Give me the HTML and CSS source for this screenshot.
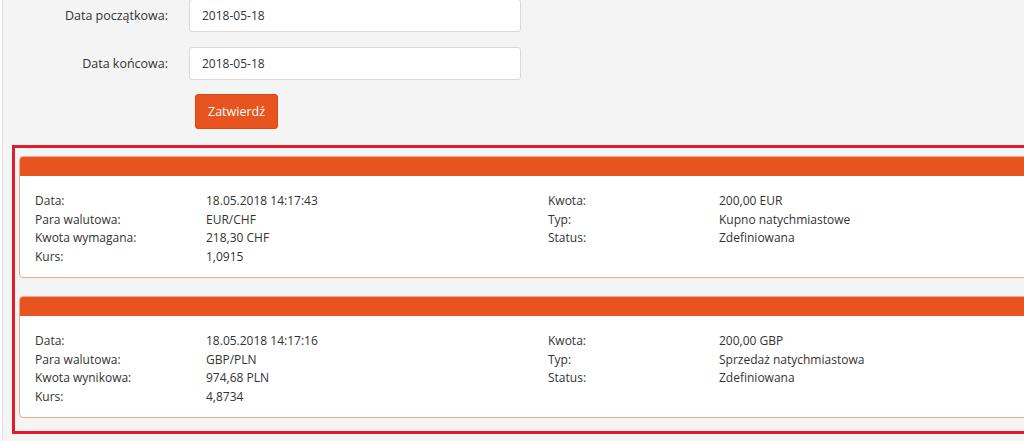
FILE: index.html
```html
<!DOCTYPE html>
<html lang="pl">
<head>
    <meta charset="UTF-8">
    <title>Transakcje</title>
    <link rel="stylesheet" href="styles.css">
</head>
<body>
    <div class="page">
        <form class="filter-form">
            <div class="form-row">
                <label for="date-from">Data początkowa:</label>
                <input type="text" id="date-from" value="2018-05-18">
            </div>
            <div class="form-row">
                <label for="date-to">Data końcowa:</label>
                <input type="text" id="date-to" value="2018-05-18">
            </div>
            <button type="button" class="btn-submit">Zatwierdź</button>
        </form>

        <section class="results">
            <div class="deal-card">
                <div class="deal-header"></div>
                <div class="deal-body">
                    <div class="deal-col">
                        <span>Data:</span><span>18.05.2018 14:17:43</span>
                        <span>Para walutowa:</span><span>EUR/CHF</span>
                        <span>Kwota wymagana:</span><span>218,30 CHF</span>
                        <span>Kurs:</span><span>1,0915</span>
                    </div>
                    <div class="deal-col">
                        <span>Kwota:</span><span>200,00 EUR</span>
                        <span>Typ:</span><span>Kupno natychmiastowe</span>
                        <span>Status:</span><span>Zdefiniowana</span>
                    </div>
                </div>
            </div>

            <div class="deal-card">
                <div class="deal-header"></div>
                <div class="deal-body">
                    <div class="deal-col">
                        <span>Data:</span><span>18.05.2018 14:17:16</span>
                        <span>Para walutowa:</span><span>GBP/PLN</span>
                        <span>Kwota wynikowa:</span><span>974,68 PLN</span>
                        <span>Kurs:</span><span>4,8734</span>
                    </div>
                    <div class="deal-col">
                        <span>Kwota:</span><span>200,00 GBP</span>
                        <span>Typ:</span><span>Sprzedaż natychmiastowa</span>
                        <span>Status:</span><span>Zdefiniowana</span>
                    </div>
                </div>
            </div>
        </section>
    </div>
</body>
</html>
```

FILE: styles.css
```css
html, body {
    margin: 0;
    padding: 0;
    background: #fff;
    overflow: hidden;
}
body {
    font-family: 'Open Sans', 'DejaVu Sans', sans-serif;
    font-size: 12px;
    color: #333;
}
.page {
    margin-left: 2px;
    border-left: 1px solid #e2e2e2;
    background: #f4f4f4;
    min-height: 441px;
    width: 1100px;
    display: flow-root;
}
.filter-form {
    margin-top: -1px;
    padding-bottom: 16px;
}
.form-row {
    display: flex;
    align-items: center;
    margin-bottom: 15px;
}
.form-row:nth-child(2) {
    margin-bottom: 14px;
}
.form-row label {
    width: 165px;
    text-align: right;
    margin-right: 21px;
    font-size: 12.5px;
    color: #333;
}
.form-row input {
    width: 332px;
    height: 33px;
    box-sizing: border-box;
    border: 1px solid #d9d9d9;
    border-radius: 3px;
    background: #fff;
    padding: 0 12px;
    font-family: inherit;
    font-size: 12px;
    color: #333;
}
.btn-submit {
    display: block;
    margin-left: 192px;
    height: 35px;
    padding: 0 12px;
    background: #e8541f;
    border: 1px solid #d64a19;
    border-radius: 3px;
    color: #fff;
    font-family: inherit;
    font-size: 12.5px;
}
.results {
    margin-left: 9px;
    border: 3px solid #e01b2b;
    padding: 8px 0 13px 4px;
}
.deal-card {
    background: #fff;
    border: 1px solid #f0a88a;
    border-radius: 4px;
    overflow: hidden;
    margin-bottom: 18px;
}
.deal-card:last-child {
    margin-bottom: 0;
}
.deal-header {
    height: 19px;
    background: #e8541f;
}
.deal-body {
    display: flex;
    padding: 16px 15px 10px;
}
.deal-col {
    width: 513px;
    display: grid;
    grid-template-columns: 171px 1fr;
    line-height: 18.7px;
    align-content: start;
}
```
